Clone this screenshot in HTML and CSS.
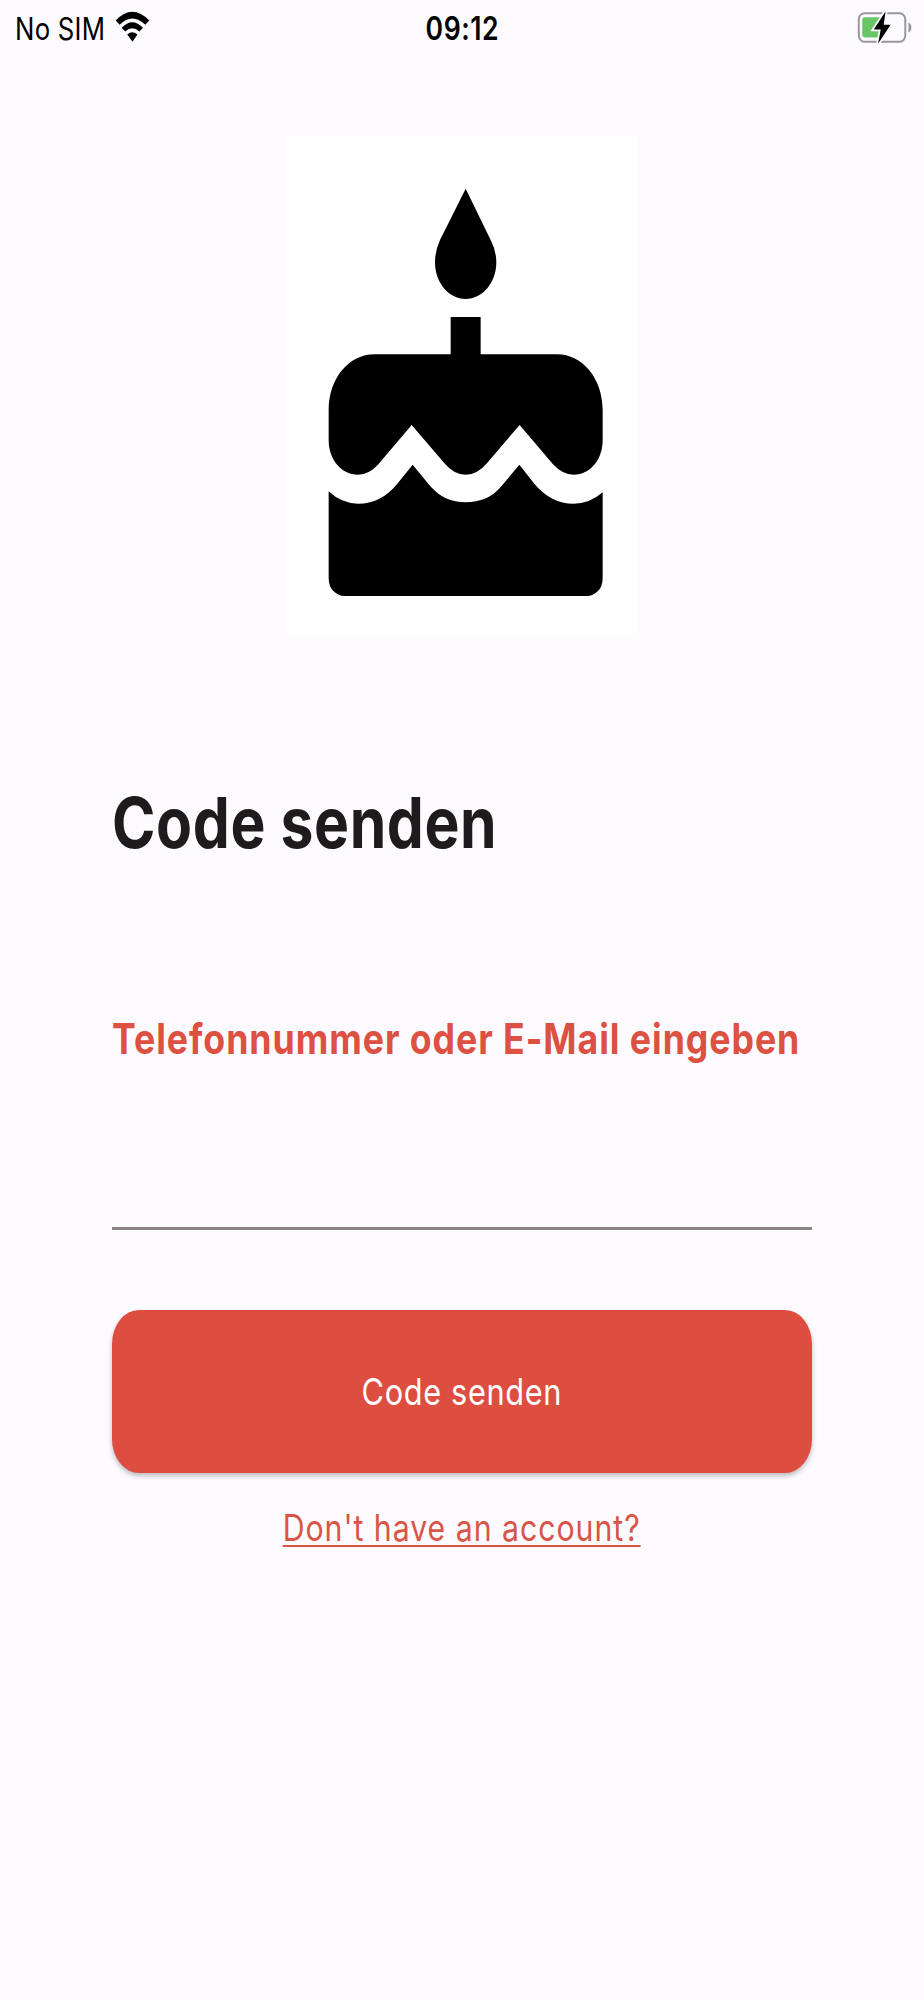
FILE: index.html
```
<!DOCTYPE html>
<html lang="de">
<head>
    <meta charset="UTF-8">
    <meta name="viewport" content="width=device-width, initial-scale=1.0">
    <title>Code senden</title>
    <link rel="stylesheet" href="styles.css">
</head>
<body>
    <div class="status-bar">
        <div class="carrier">
            <span class="carrier-name"><span class="text">No SIM</span></span>
            <svg class="wifi" viewBox="345 33 106 94">
                <path d="M347 62Q397 9 449 62L437 75Q397 36 359 75Z"/>
                <path d="M365 84Q397 50 430 84L419 95Q397 76 376 95Z"/>
                <path d="M382 104Q397 91 413 104L398 126Z"/>
            </svg>
        </div>
        <div class="time"><span class="text">09:12</span></div>
        <div class="battery">
            <svg viewBox="52 32 168 100">
                <rect x="56.5" y="38.5" width="141" height="87" rx="17" ry="20" fill="none" stroke="#98979b" stroke-width="6"/>
                <path d="M207 67Q216 71 216 82T207 97Z" fill="#98979b"/>
                <rect x="67" y="51" width="60" height="61" rx="8" ry="10" fill="#68c466"/>
                <path d="M138 33L102 88H123L115 131L153 74H132Z" fill="#000" stroke="#fdfbff" stroke-width="11" paint-order="stroke"/>
            </svg>
        </div>
    </div>

    <main class="content">
        <div class="logo">
            <svg viewBox="20 18 1050 1500">
                <path d="M556 176L631 330Q648 363 648 397C648 458 607 507 556 507S464 458 464 397Q464 363 479 330Z"/>
                <path d="M511 561H601V673H830C906 673 967 745 967 840V930C967 990 929 1034 880 1034Q846 1034 818 1003L718 885L621 998Q591 1034 556 1034T491 998L394 885L294 1003Q267 1034 233 1034C184 1034 145 990 145 930V840C145 745 206 673 282 673H511Z"/>
                <path d="M145 1084Q184 1121 233 1121C280 1121 318 1101 351 1061L397 1004L450 1069C480 1102 513 1117 556 1117S636 1102 663 1069L717 1004L762 1061C796 1101 834 1121 880 1121Q929 1121 967 1087V1343Q967 1370 952 1384Q938 1398 920 1398H192Q174 1398 160 1384Q145 1370 145 1343Z"/>
            </svg>
        </div>

        <h1 class="title"><span class="text">Code senden</span></h1>

        <form class="form">
            <label class="label" for="contact"><span class="text">Telefonnummer oder E-Mail eingeben</span></label>
            <input class="input" type="text" id="contact" name="contact">
            <button class="btn" type="button"><span class="text">Code senden</span></button>
        </form>

        <a class="link" href="#"><span class="text">Don't have an account?</span></a>
    </main>
</body>
</html>
```

FILE: styles.css
```
* { margin: 0; padding: 0; box-sizing: border-box; }

body {
    font-family: Inter, 'Liberation Sans', sans-serif;
    background: #fdfbff;
    min-height: 100vh;
    color: #1f1a1b;
}

svg { display: block; }

/* tall, narrow lettering */
.text {
    display: inline-block;
    white-space: nowrap;
    transform: scaleX(0.83);
    transform-origin: left center;
}

.status-bar {
    display: grid;
    grid-template-columns: 1fr auto 1fr;
    height: 56px;
    padding: 0 11px;
    color: #000;
    line-height: 58px;
}

.carrier {
    display: flex;
    padding-left: 4px;
}

.carrier-name {
    width: 100px;
    font-size: 31px;
    letter-spacing: 0.3px;
}

.wifi {
    width: 35px;
    height: 31px;
    margin-top: 11px;
}

.time {
    font-size: 32px;
    font-weight: 600;
    letter-spacing: 0.7px;
}

.time .text { transform-origin: center; }

.battery svg {
    width: 56px;
    height: 33px;
    margin: 11px 0 0 auto;
}

.content {
    display: flex;
    flex-direction: column;
    width: 700px;
    margin: 80px auto 0;
}

.logo {
    width: 350px;
    height: 500px;
    margin: 0 auto;
    background: #fff;
}

.title {
    height: 90px;
    margin-top: 142px;
    font-size: 70px;
    font-weight: 650;
    letter-spacing: 0.7px;
    line-height: 90px;
}

.title .text { transform: scaleX(0.84); }

.form {
    display: flex;
    flex-direction: column;
}

.label {
    height: 50px;
    margin-top: 146px;
    color: #dd5142;
    font-size: 42px;
    font-weight: 650;
    letter-spacing: 1.1px;
    line-height: 50px;
}

.label .text { transform: scaleX(0.85); }

.input {
    height: 166px;
    border: none;
    border-bottom: 3px solid #8b8384;
    background: transparent;
    font: inherit;
    font-size: 37px;
    outline: none;
}

.btn {
    height: 163px;
    margin-top: 80px;
    border: none;
    border-radius: 27px / 34px;
    background: #de4e40;
    box-shadow: 0 3px 5px rgba(0, 0, 0, 0.25);
    color: #fff;
    font-family: inherit;
    font-size: 37px;
    letter-spacing: 0.8px;
}

.btn .text,
.link .text { transform-origin: center; }

.link {
    align-self: center;
    margin-top: 32px;
    color: #d85547;
    font-size: 36.5px;
    letter-spacing: 1.15px;
    line-height: 46px;
    text-decoration: none;
}

.link .text {
    text-decoration: underline 2px;
    text-underline-offset: 4px;
    text-decoration-skip-ink: none;
}
```
